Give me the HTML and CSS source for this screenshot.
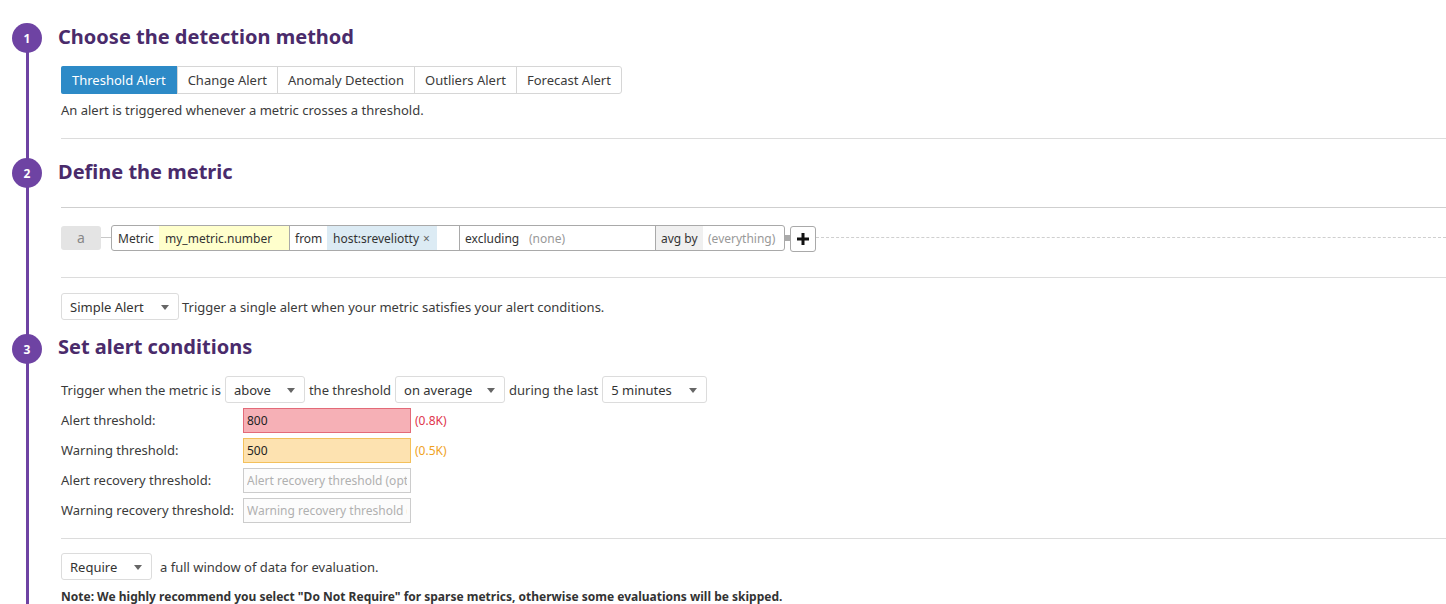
FILE: index.html
```html
<!DOCTYPE html>
<html>
<head>
<meta charset="utf-8">
<link rel="stylesheet" href="styles.css">
</head>
<body>
<div class="steps">
  <section class="step">
    <span class="num">1</span>
    <h2 class="title">Choose the detection method</h2>
    <div class="btn-group">
      <span class="btn active">Threshold Alert</span>
      <span class="btn">Change Alert</span>
      <span class="btn">Anomaly Detection</span>
      <span class="btn">Outliers Alert</span>
      <span class="btn">Forecast Alert</span>
    </div>
    <p class="desc">An alert is triggered whenever a metric crosses a threshold.</p>
    <hr class="rule r1">
  </section>

  <section class="step">
    <span class="num">2</span>
    <h2 class="title t2">Define the metric</h2>
    <hr class="rule r2">
    <div class="query-row">
      <span class="qname">a</span>
      <span class="conn"></span>
      <div class="query">
        <span class="seg lbl w-metric-l">Metric</span>
        <span class="seg metric">my_metric.number</span>
        <span class="seg lbl sep w-from">from</span>
        <span class="seg tag">host:sreveliotty <span class="x">×</span></span>
        <span class="seg spacer"></span>
        <span class="seg lbl sep w-excl-l">excluding</span>
        <span class="seg muted excl">(none)</span>
        <span class="seg lbl sep avg">avg by</span>
        <span class="seg muted every">(everything)</span>
      </div>
      <span class="nub"></span>
      <span class="plus">
        <svg width="12" height="12" viewBox="0 0 12 12"><path d="M4.5 0h3v4.5H12v3H7.5V12h-3V7.5H0v-3h4.5z" fill="#111"/></svg>
      </span>
      <span class="dash"></span>
    </div>
    <hr class="rule r3">
    <div class="inline-row simple">
      <span class="select w118">Simple Alert<i class="caret"></i></span>
      <span>Trigger a single alert when your metric satisfies your alert conditions.</span>
    </div>
  </section>

  <section class="step">
    <span class="num">3</span>
    <h2 class="title t3">Set alert conditions</h2>
    <div class="inline-row trigger">
      <span>Trigger when the metric is</span>
      <span class="select w80">above<i class="caret"></i></span>
      <span>the threshold</span>
      <span class="select w110">on average<i class="caret"></i></span>
      <span>during the last</span>
      <span class="select w104">5 minutes<i class="caret"></i></span>
    </div>
    <div class="thresholds">
      <label class="tlabel">Alert threshold:</label>
      <div class="tfield"><input class="tin alert" value="800"><span class="hint red">(0.8K)</span></div>
      <label class="tlabel">Warning threshold:</label>
      <div class="tfield"><input class="tin warn" value="500"><span class="hint orange">(0.5K)</span></div>
      <label class="tlabel">Alert recovery threshold:</label>
      <div class="tfield"><input class="tin ph" placeholder="Alert recovery threshold (optional)"></div>
      <label class="tlabel">Warning recovery threshold:</label>
      <div class="tfield"><input class="tin ph" placeholder="Warning recovery threshold (optional)"></div>
    </div>
    <hr class="rule r4">
    <div class="inline-row require">
      <span class="select w91">Require<i class="caret"></i></span>
      <span class="req-text">a full window of data for evaluation.</span>
    </div>
    <p class="note">Note: We highly recommend you select "Do Not Require" for sparse metrics, otherwise some evaluations will be skipped.</p>
  </section>
</div>
</body>
</html>
```

FILE: styles.css
```css
* { box-sizing: border-box; }
html, body { margin: 0; padding: 0; background: #fff; }
body {
  font-family: "Noto Sans", "Open Sans", sans-serif;
  font-size: 13px;
  color: #3b3b3b;
  width: 1446px;
  height: 604px;
  overflow: hidden;
}
.steps {
  position: relative;
  height: 604px;
  overflow: hidden;
  padding: 25px 0 0 61px;
}
.steps::before {
  content: "";
  position: absolute;
  left: 26px;
  top: 38px;
  bottom: 0;
  width: 3px;
  background: #6e43a3;
}
.step { position: relative; }
.num {
  position: absolute;
  left: -49px;
  top: -2px;
  width: 30px;
  height: 30px;
  border-radius: 50%;
  background: #6e43a3;
  color: #fff;
  font-size: 12px;
  font-weight: 700;
  display: flex;
  align-items: center;
  justify-content: center;
  z-index: 1;
}
.title {
  margin: 0 0 17px -3px;
  font-size: 20px;
  line-height: 24px;
  font-weight: 700;
  color: #4a2b6b;
}
.btn-group {
  display: inline-flex;
  border: 1px solid #d6d6d6;
  border-radius: 3px;
  height: 28px;
}
.btn {
  display: flex;
  align-items: center;
  padding: 0 10px;
  border-left: 1px solid #d6d6d6;
  color: #3b3b3b;
  font-size: 13px;
}
.btn:first-child { border-left: 0; }
.btn.active {
  background: #2d8ac7;
  color: #fff;
  border-radius: 2px 0 0 2px;
  margin: -1px 0 -1px -1px;
  padding: 0 11px;
}
.desc {
  margin: 7px 0 0;
  line-height: 18px;
}
.rule {
  border: 0;
  border-top: 1px solid #dcdcdc;
  margin: 0;
  height: 0;
}
.r1 { margin-top: 19px; }
.step:nth-child(2) { padding-top: 21px; }
.step:nth-child(2) .num { top: 19px; }
.t2 { margin-bottom: 0; }
.r2 { margin-top: 23px; border-top-color: #cfcfcf; }
.query-row {
  display: flex;
  align-items: center;
  margin-top: 16px;
  height: 27px;
}
.qname {
  width: 40px;
  height: 24px;
  background: #e4e4e4;
  border-radius: 3px;
  color: #888;
  font-size: 14px;
  display: flex;
  align-items: center;
  justify-content: center;
}
.conn { width: 10px; height: 1px; background: #c8c8c8; }
.query {
  display: flex;
  height: 26px;
  margin-top: 1px;
  border: 1px solid #a9a9a9;
  border-radius: 3px;
  overflow: hidden;
}
.seg {
  display: flex;
  align-items: center;
  padding: 0 6px;
  font-size: 12px;
  white-space: nowrap;
  color: #333;
  flex: none;
}
.sep { border-left: 1px solid #a9a9a9; }
.w-metric-l { width: 47px; }
.metric { background: #ffffcc; width: 130px; }
.w-from { width: 38px; padding: 0 5px; }
.tag { background: #dcebf4; width: 110px; }
.x { color: #666; margin-left: 4px; font-size: 12px; }
.spacer { width: 22px; padding: 0; }
.w-excl-l { width: 66px; padding: 0 5px; }
.muted { color: #999; }
.excl { width: 130px; padding: 0 4px; }
.avg { background: #f0f0f0; width: 48px; padding: 0 5px; }
.every { width: 81px; padding: 0 5px; }
.nub { width: 5px; height: 6px; background: #aaa; }
.plus {
  width: 26px;
  height: 26px;
  border: 1px solid #a9a9a9;
  border-radius: 3px;
  display: flex;
  align-items: center;
  justify-content: center;
  margin-top: 2px;
}
.dash {
  flex: 1;
  height: 0;
  border-top: 1px dashed #cfcfcf;
}
.r3 { margin-top: 26px; }
.inline-row {
  display: flex;
  align-items: center;
  gap: 4px;
  white-space: nowrap;
}
.simple { margin-top: 15px; gap: 3px; }
.select {
  position: relative;
  height: 27px;
  border: 1px solid #dcdcdc;
  border-radius: 3px;
  background: #fff;
  display: flex;
  align-items: center;
  padding-left: 8px;
  font-size: 13px;
  color: #333;
}
.caret {
  position: absolute;
  right: 9px;
  top: 11px;
  width: 0;
  height: 0;
  border-left: 4px solid transparent;
  border-right: 4px solid transparent;
  border-top: 5px solid #666;
}
.w118 { width: 118px; }
.w80 { width: 80px; }
.w110 { width: 110px; }
.w104 { width: 105px; }
.w91 { width: 91px; }
.step:nth-child(3) { padding-top: 15px; }
.step:nth-child(3) .num { top: 14px; }
.t3 { margin-bottom: 17px; }
.trigger { height: 27px; }
.thresholds {
  display: grid;
  grid-template-columns: 182px auto;
  row-gap: 5px;
  margin-top: 5px;
  align-items: center;
}
.tlabel { font-size: 13px; line-height: 25px; }
.tfield { display: flex; align-items: center; gap: 4px; }
.tin {
  width: 168px;
  height: 25px;
  margin: 0;
  border: 1px solid #ccc;
  border-radius: 0;
  padding: 0 3px;
  font-family: "Noto Sans", "Open Sans", sans-serif;
  font-size: 12px;
  color: #222;
  background: #fff;
  outline: none;
}
.tin.alert { background: #f6b0b6; border-color: #e36a78; }
.tin.warn { background: #fde2b0; border-color: #f3c05b; }
.tin.ph { background: #fcfcfc; }
.tin.ph::placeholder { color: #b0b0b0; opacity: 1; }
.hint { font-size: 12px; }
.red { color: #e0364c; }
.orange { color: #f0a21e; }
.r4 { margin-top: 15px; }
.require { margin-top: 14px; height: 27px; }
.req-text { margin-left: 4px; }
.note {
  margin: 10px 0 0;
  font-size: 12px;
  font-weight: 700;
  line-height: 14px;
  color: #333;
  white-space: nowrap;
}
```
